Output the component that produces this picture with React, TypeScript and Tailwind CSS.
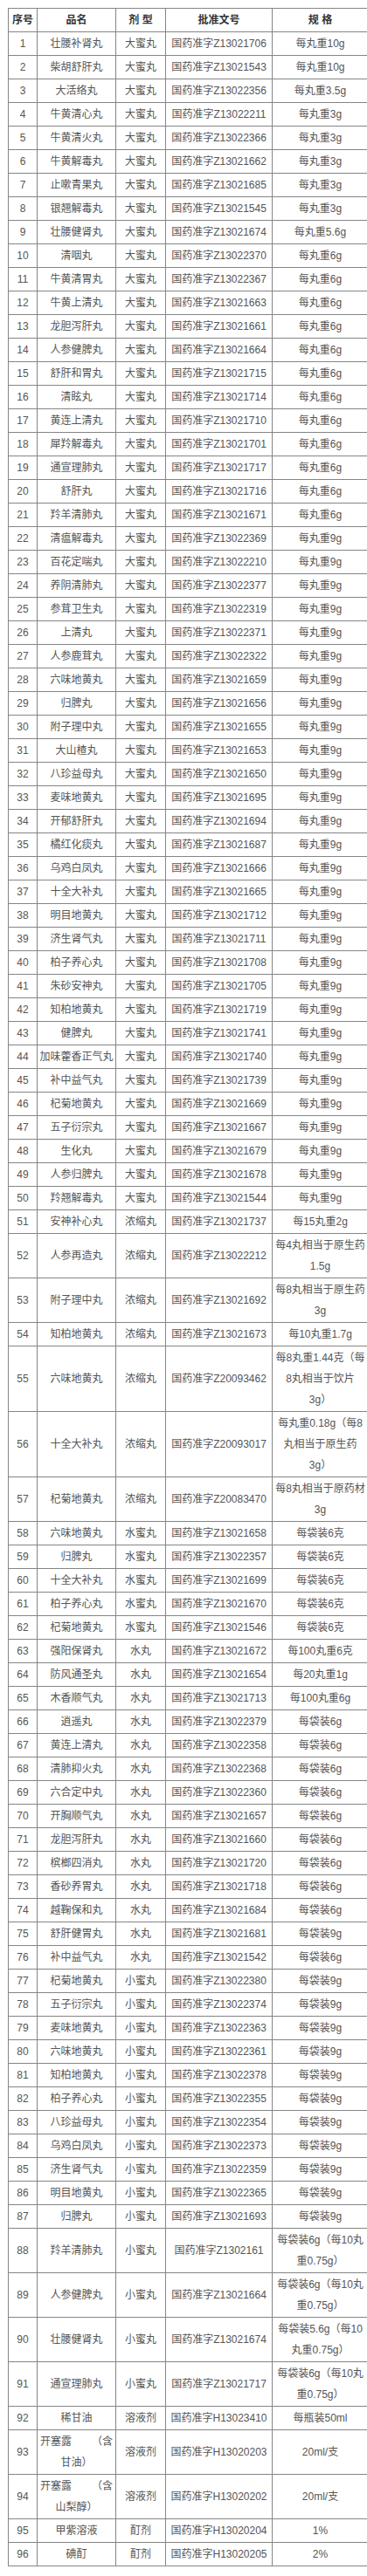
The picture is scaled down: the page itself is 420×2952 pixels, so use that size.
import React from "react";

type Row = [string, string, string, string];

const rows: Row[] = [
  ["壮腰补肾丸", "大蜜丸", "国药准字Z13021706", "每丸重10g"],
  ["柴胡舒肝丸", "大蜜丸", "国药准字Z13021543", "每丸重10g"],
  ["大活络丸", "大蜜丸", "国药准字Z13022356", "每丸重3.5g"],
  ["牛黄清心丸", "大蜜丸", "国药准字Z13022211", "每丸重3g"],
  ["牛黄清火丸", "大蜜丸", "国药准字Z13022366", "每丸重3g"],
  ["牛黄解毒丸", "大蜜丸", "国药准字Z13021662", "每丸重3g"],
  ["止嗽青果丸", "大蜜丸", "国药准字Z13021685", "每丸重3g"],
  ["银翘解毒丸", "大蜜丸", "国药准字Z13021545", "每丸重3g"],
  ["壮腰健肾丸", "大蜜丸", "国药准字Z13021674", "每丸重5.6g"],
  ["清咽丸", "大蜜丸", "国药准字Z13022370", "每丸重6g"],
  ["牛黄清胃丸", "大蜜丸", "国药准字Z13022367", "每丸重6g"],
  ["牛黄上清丸", "大蜜丸", "国药准字Z13021663", "每丸重6g"],
  ["龙胆泻肝丸", "大蜜丸", "国药准字Z13021661", "每丸重6g"],
  ["人参健脾丸", "大蜜丸", "国药准字Z13021664", "每丸重6g"],
  ["舒肝和胃丸", "大蜜丸", "国药准字Z13021715", "每丸重6g"],
  ["清眩丸", "大蜜丸", "国药准字Z13021714", "每丸重6g"],
  ["黄连上清丸", "大蜜丸", "国药准字Z13021710", "每丸重6g"],
  ["犀羚解毒丸", "大蜜丸", "国药准字Z13021701", "每丸重6g"],
  ["通宣理肺丸", "大蜜丸", "国药准字Z13021717", "每丸重6g"],
  ["舒肝丸", "大蜜丸", "国药准字Z13021716", "每丸重6g"],
  ["羚羊清肺丸", "大蜜丸", "国药准字Z13021671", "每丸重6g"],
  ["清瘟解毒丸", "大蜜丸", "国药准字Z13022369", "每丸重9g"],
  ["百花定喘丸", "大蜜丸", "国药准字Z13022210", "每丸重9g"],
  ["养阴清肺丸", "大蜜丸", "国药准字Z13022377", "每丸重9g"],
  ["参茸卫生丸", "大蜜丸", "国药准字Z13022319", "每丸重9g"],
  ["上清丸", "大蜜丸", "国药准字Z13022371", "每丸重9g"],
  ["人参鹿茸丸", "大蜜丸", "国药准字Z13022322", "每丸重9g"],
  ["六味地黄丸", "大蜜丸", "国药准字Z13021659", "每丸重9g"],
  ["归脾丸", "大蜜丸", "国药准字Z13021656", "每丸重9g"],
  ["附子理中丸", "大蜜丸", "国药准字Z13021655", "每丸重9g"],
  ["大山楂丸", "大蜜丸", "国药准字Z13021653", "每丸重9g"],
  ["八珍益母丸", "大蜜丸", "国药准字Z13021650", "每丸重9g"],
  ["麦味地黄丸", "大蜜丸", "国药准字Z13021695", "每丸重9g"],
  ["开郁舒肝丸", "大蜜丸", "国药准字Z13021694", "每丸重9g"],
  ["橘红化痰丸", "大蜜丸", "国药准字Z13021687", "每丸重9g"],
  ["乌鸡白凤丸", "大蜜丸", "国药准字Z13021666", "每丸重9g"],
  ["十全大补丸", "大蜜丸", "国药准字Z13021665", "每丸重9g"],
  ["明目地黄丸", "大蜜丸", "国药准字Z13021712", "每丸重9g"],
  ["济生肾气丸", "大蜜丸", "国药准字Z13021711", "每丸重9g"],
  ["柏子养心丸", "大蜜丸", "国药准字Z13021708", "每丸重9g"],
  ["朱砂安神丸", "大蜜丸", "国药准字Z13021705", "每丸重9g"],
  ["知柏地黄丸", "大蜜丸", "国药准字Z13021719", "每丸重9g"],
  ["健脾丸", "大蜜丸", "国药准字Z13021741", "每丸重9g"],
  ["加味藿香正气丸", "大蜜丸", "国药准字Z13021740", "每丸重9g"],
  ["补中益气丸", "大蜜丸", "国药准字Z13021739", "每丸重9g"],
  ["杞菊地黄丸", "大蜜丸", "国药准字Z13021669", "每丸重9g"],
  ["五子衍宗丸", "大蜜丸", "国药准字Z13021667", "每丸重9g"],
  ["生化丸", "大蜜丸", "国药准字Z13021679", "每丸重9g"],
  ["人参归脾丸", "大蜜丸", "国药准字Z13021678", "每丸重9g"],
  ["羚翘解毒丸", "大蜜丸", "国药准字Z13021544", "每丸重9g"],
  ["安神补心丸", "浓缩丸", "国药准字Z13021737", "每15丸重2g"],
  ["人参再造丸", "浓缩丸", "国药准字Z13022212", "每4丸相当于原生药\n1.5g"],
  ["附子理中丸", "浓缩丸", "国药准字Z13021692", "每8丸相当于原生药\n3g"],
  ["知柏地黄丸", "浓缩丸", "国药准字Z13021673", "每10丸重1.7g"],
  ["六味地黄丸", "浓缩丸", "国药准字Z20093462", "每8丸重1.44克（每\n8丸相当于饮片\n3g）"],
  ["十全大补丸", "浓缩丸", "国药准字Z20093017", "每丸重0.18g（每8\n丸相当于原生药\n3g）"],
  ["杞菊地黄丸", "浓缩丸", "国药准字Z20083470", "每8丸相当于原药材\n3g"],
  ["六味地黄丸", "水蜜丸", "国药准字Z13021658", "每袋装6克"],
  ["归脾丸", "水蜜丸", "国药准字Z13022357", "每袋装6克"],
  ["十全大补丸", "水蜜丸", "国药准字Z13021699", "每袋装6克"],
  ["柏子养心丸", "水蜜丸", "国药准字Z13021670", "每袋装6克"],
  ["杞菊地黄丸", "水蜜丸", "国药准字Z13021546", "每袋装6克"],
  ["强阳保肾丸", "水丸", "国药准字Z13021672", "每100丸重6克"],
  ["防风通圣丸", "水丸", "国药准字Z13021654", "每20丸重1g"],
  ["木香顺气丸", "水丸", "国药准字Z13021713", "每100丸重6g"],
  ["逍遥丸", "水丸", "国药准字Z13022379", "每袋装6g"],
  ["黄连上清丸", "水丸", "国药准字Z13022358", "每袋装6g"],
  ["清肺抑火丸", "水丸", "国药准字Z13022368", "每袋装6g"],
  ["六合定中丸", "水丸", "国药准字Z13022360", "每袋装6g"],
  ["开胸顺气丸", "水丸", "国药准字Z13021657", "每袋装6g"],
  ["龙胆泻肝丸", "水丸", "国药准字Z13021660", "每袋装6g"],
  ["槟榔四消丸", "水丸", "国药准字Z13021720", "每袋装6g"],
  ["香砂养胃丸", "水丸", "国药准字Z13021718", "每袋装6g"],
  ["越鞠保和丸", "水丸", "国药准字Z13021684", "每袋装6g"],
  ["舒肝健胃丸", "水丸", "国药准字Z13021681", "每袋装9g"],
  ["补中益气丸", "水丸", "国药准字Z13021542", "每袋装6g"],
  ["杞菊地黄丸", "小蜜丸", "国药准字Z13022380", "每袋装9g"],
  ["五子衍宗丸", "小蜜丸", "国药准字Z13022374", "每袋装9g"],
  ["麦味地黄丸", "小蜜丸", "国药准字Z13022363", "每袋装9g"],
  ["六味地黄丸", "小蜜丸", "国药准字Z13022361", "每袋装9g"],
  ["知柏地黄丸", "小蜜丸", "国药准字Z13022378", "每袋装9g"],
  ["柏子养心丸", "小蜜丸", "国药准字Z13022355", "每袋装9g"],
  ["八珍益母丸", "小蜜丸", "国药准字Z13022354", "每袋装9g"],
  ["乌鸡白凤丸", "小蜜丸", "国药准字Z13022373", "每袋装9g"],
  ["济生肾气丸", "小蜜丸", "国药准字Z13022359", "每袋装9g"],
  ["明目地黄丸", "小蜜丸", "国药准字Z13022365", "每袋装9g"],
  ["归脾丸", "小蜜丸", "国药准字Z13021693", "每袋装9g"],
  ["羚羊清肺丸", "小蜜丸", "国药准字Z1302161", "每袋装6g（每10丸\n重0.75g）"],
  ["人参健脾丸", "小蜜丸", "国药准字Z13021664", "每袋装6g（每10丸\n重0.75g）"],
  ["壮腰健肾丸", "小蜜丸", "国药准字Z13021674", "每袋装5.6g（每10\n丸重0.75g）"],
  ["通宣理肺丸", "小蜜丸", "国药准字Z13021717", "每袋装6g（每10丸\n重0.75g）"],
  ["稀甘油", "溶液剂", "国药准字H13023410", "每瓶装50ml"],
  ["开塞露|（含|甘油）", "溶液剂", "国药准字H13020203", "20ml/支"],
  ["开塞露|（含|山梨醇）", "溶液剂", "国药准字H13020202", "20ml/支"],
  ["甲紫溶液", "酊剂", "国药准字H13020204", "1%"],
  ["碘酊", "酊剂", "国药准字H13020205", "2%"],
];

const cell =
  "flex flex-col items-center justify-center border-r border-b border-[#858585] px-[3px] py-px text-center whitespace-nowrap";

function Lines({ text }: { text: string }) {
  const parts = text.split("\n");
  return (
    <>
      {parts.map((p, i) => (
        <span key={i} className="block">
          {p}
        </span>
      ))}
    </>
  );
}

function Name({ text }: { text: string }) {
  if (text.includes("|")) {
    const [a, b, c] = text.split("|");
    return (
      <div className="w-full">
        <div className="flex w-full justify-between">
          <span>{a}</span>
          <span>{b}</span>
        </div>
        <div className="text-center">{c}</div>
      </div>
    );
  }
  return <span>{text}</span>;
}

export default function App() {
  return (
    <div className="w-[420px] overflow-hidden bg-white pt-[9px] pb-[11px]">
      <div className="ml-[9px] grid w-[412px] grid-cols-[33px_90px_57px_122px_110px] border-l border-t border-[#858585] font-['Liberation_Sans','Noto_Sans_CJK_SC',sans-serif] text-[12px] leading-[24px] text-[#555]">
        <div className={`${cell} font-bold text-[#333]`}>序号</div>
        <div className={`${cell} font-bold text-[#333]`}>品名</div>
        <div className={`${cell} font-bold text-[#333]`}>剂&nbsp;型</div>
        <div className={`${cell} font-bold text-[#333]`}>批准文号</div>
        <div className={`${cell} font-bold text-[#333]`}>规&nbsp;格</div>
        {rows.map((r, i) => (
          <React.Fragment key={i}>
            <div className={cell}>{i + 1}</div>
            <div className={cell}>
              <Name text={r[0]} />
            </div>
            <div className={cell}>{r[1]}</div>
            <div className={cell}>{r[2]}</div>
            <div className={cell}>
              <Lines text={r[3]} />
            </div>
          </React.Fragment>
        ))}
      </div>
    </div>
  );
}
